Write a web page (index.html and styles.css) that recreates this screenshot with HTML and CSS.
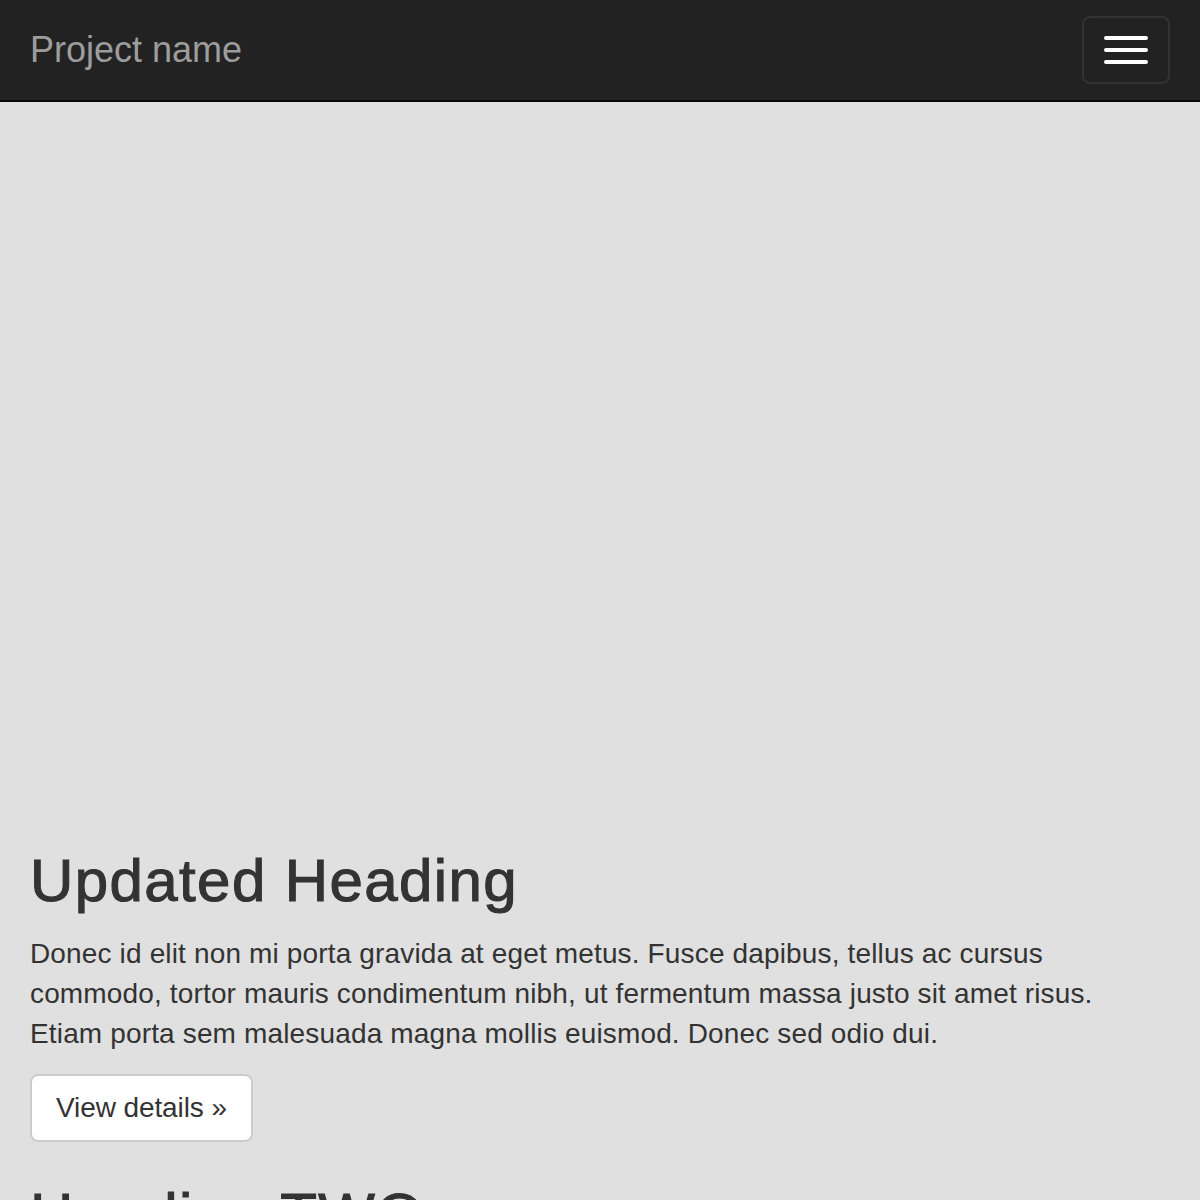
FILE: index.html
```html
<!DOCTYPE html>
<html lang="en">
<head>
<meta charset="utf-8">
<title>Project name</title>
<link rel="stylesheet" href="styles.css">
</head>
<body>
<nav class="navbar">
  <a class="brand" href="#">Project name</a>
  <button class="toggle" type="button" aria-label="Toggle navigation">
    <span class="bar"></span>
    <span class="bar"></span>
    <span class="bar"></span>
  </button>
</nav>
<div class="hero"></div>
<main class="container">
  <section class="col">
    <h2>Updated Heading</h2>
    <p>Donec id elit non mi porta gravida at eget metus. Fusce dapibus, tellus ac cursus commodo, tortor mauris condimentum nibh, ut fermentum massa justo sit amet risus. Etiam porta sem malesuada magna mollis euismod. Donec sed odio dui.</p>
    <p><a class="btn" href="#">View details &raquo;</a></p>
  </section>
  <section class="col">
    <h2>Heading TWO</h2>
    <p>Donec id elit non mi porta gravida at eget metus. Fusce dapibus, tellus ac cursus commodo, tortor mauris condimentum nibh, ut fermentum massa justo sit amet risus. Etiam porta sem malesuada magna mollis euismod. Donec sed odio dui.</p>
    <p><a class="btn" href="#">View details &raquo;</a></p>
  </section>
</main>
</body>
</html>
```

FILE: styles.css
```css
* { box-sizing: border-box; }
html, body { margin: 0; padding: 0; }
body {
  background: #e0e0e0;
  color: #333;
  font-family: "Liberation Sans", Arial, Helvetica, sans-serif;
  font-size: 28px;
  line-height: 40px;
}
.navbar {
  height: 102px;
  background: #222;
  border-bottom: 2px solid #080808;
  display: flex;
  align-items: center;
  justify-content: space-between;
  padding: 0 30px;
}
.brand {
  color: #9d9d9d;
  font-size: 36px;
  line-height: 40px;
  text-decoration: none;
}
.toggle {
  width: 88px;
  height: 68px;
  background: transparent;
  border: 2px solid #333;
  border-radius: 8px;
  padding: 0;
  display: flex;
  flex-direction: column;
  align-items: center;
  justify-content: center;
  gap: 8px;
}
.bar {
  display: block;
  width: 44px;
  height: 4px;
  background: #fff;
  border-radius: 2px;
}
.hero {
  height: 706px;
}
.container {
  padding: 0 30px;
}
.col {
  max-width: 1110px;
}
h2 {
  font-size: 60px;
  line-height: 66px;
  font-weight: 400;
  letter-spacing: 1.4px;
  -webkit-text-stroke: 1.1px #333;
  margin: 40px 0 20px;
}
p {
  margin: 0 0 20px;
  letter-spacing: 0.15px;
}
.btn {
  display: inline-block;
  padding: 12px 24px;
  font-size: 28px;
  line-height: 40px;
  letter-spacing: -0.1px;
  color: #333;
  background: #fff;
  border: 2px solid #ccc;
  border-radius: 8px;
  text-decoration: none;
}
```
